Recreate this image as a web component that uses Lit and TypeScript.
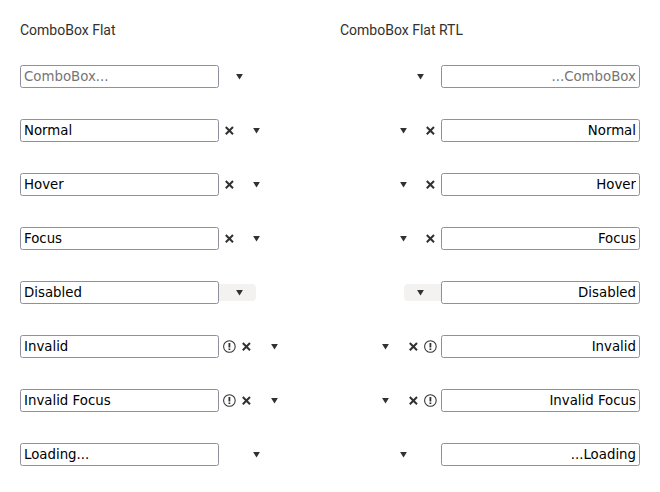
import { LitElement, html, css, svg, nothing } from "lit";
import { customElement, property } from "lit/decorators.js";

type Row = {
  value?: string;
  placeholder?: string;
  invalid?: boolean;
  clear?: boolean;
  loading?: boolean;
  disabled?: boolean;
};

const rows: Row[] = [
  { placeholder: "ComboBox..." },
  { value: "Normal", clear: true },
  { value: "Hover", clear: true },
  { value: "Focus", clear: true },
  { value: "Disabled", disabled: true },
  { value: "Invalid", invalid: true, clear: true },
  { value: "Invalid Focus", invalid: true, clear: true },
  { value: "Loading...", loading: true },
];

const clearIcon = svg`<path d="M1.8 2 L9 9.2 M9 2 L1.8 9.2" fill="none" stroke="#323130" stroke-width="2"/>`;
const warningIcon = svg`
  <circle cx="6.4" cy="6.5" r="5.8" fill="none" stroke="#323130" stroke-width="1.05"/>
  <path d="M5.5 3h1.8v4.5H5.5z M5.5 8.4h1.8v1.6H5.5z" fill="#323130"/>`;

@customElement("combo-box")
class ComboBox extends LitElement {
  @property({ attribute: false }) row: Row = {};

  static styles = css`
    :host {
      display: flex;
      height: 23px;
      align-items: center;
    }
    .input {
      box-sizing: border-box;
      width: 199px;
      height: 23px;
      margin: 0;
      padding: 0 3px;
      border: 1px solid #8f8f9d;
      border-radius: 2.5px;
      background: #fff;
      color: #000;
      font: 13.3333px/19px "DejaVu Sans", sans-serif;
      outline: none;
    }
    .input::placeholder {
      color: #757575;
      opacity: 1;
    }
    .icons {
      display: flex;
      padding-inline-start: 1.4px;
    }
    .slot {
      display: flex;
      width: 17.5px;
      height: 17px;
      align-items: center;
      justify-content: center;
    }
    .button {
      box-sizing: border-box;
      display: flex;
      width: 37px;
      height: 17px;
      padding-inline-start: 3.4px;
      margin-inline-start: -1.4px;
      align-items: center;
      justify-content: center;
    }
    .disabled {
      background: #f3f2f1;
      border-start-end-radius: 4px;
      border-end-end-radius: 4px;
    }
    svg {
      display: block;
      flex: none;
    }
  `;

  render() {
    const { value = "", placeholder = "", invalid, clear, loading, disabled } = this.row;
    return html`
      <input class="input" type="text" .value=${value} placeholder=${placeholder} />
      <div class="icons">
        ${invalid ? html`<span class="slot"><svg width="13" height="13" viewBox="0 0 13 13">${warningIcon}</svg></span>` : nothing}
        ${clear ? html`<span class="slot"><svg width="11" height="11" viewBox="0 0 11 11">${clearIcon}</svg></span>` : nothing}
        ${loading ? html`<span class="slot"></span>` : nothing}
        <span class="button ${disabled ? "disabled" : ""}">
          <svg width="7" height="7" viewBox="0 0 7 7"><path d="M.1 1.1h6.8L3.5 6.4z" fill="#323130" /></svg>
        </span>
      </div>
    `;
  }
}

@customElement("app-root")
class AppRoot extends LitElement {
  static styles = css`
    :host {
      box-sizing: border-box;
      display: grid;
      grid-template-columns: 300px 300px;
      column-gap: 20px;
      height: 492px;
      padding: 20px;
      background: #fff;
      overflow: hidden;
    }
    .title {
      height: 20px;
      margin: 0 0 25px;
      color: #323130;
      font: 400 14px/20px Roboto, sans-serif;
    }
    .list {
      display: flex;
      flex-direction: column;
      gap: 31px;
    }
  `;

  render() {
    return html`
      <section>
        <h1 class="title">ComboBox Flat</h1>
        <div class="list">${rows.map((row) => html`<combo-box .row=${row}></combo-box>`)}</div>
      </section>
      <section>
        <h1 class="title">ComboBox Flat RTL</h1>
        <div class="list" dir="rtl">${rows.map((row) => html`<combo-box .row=${row}></combo-box>`)}</div>
      </section>
    `;
  }
}
